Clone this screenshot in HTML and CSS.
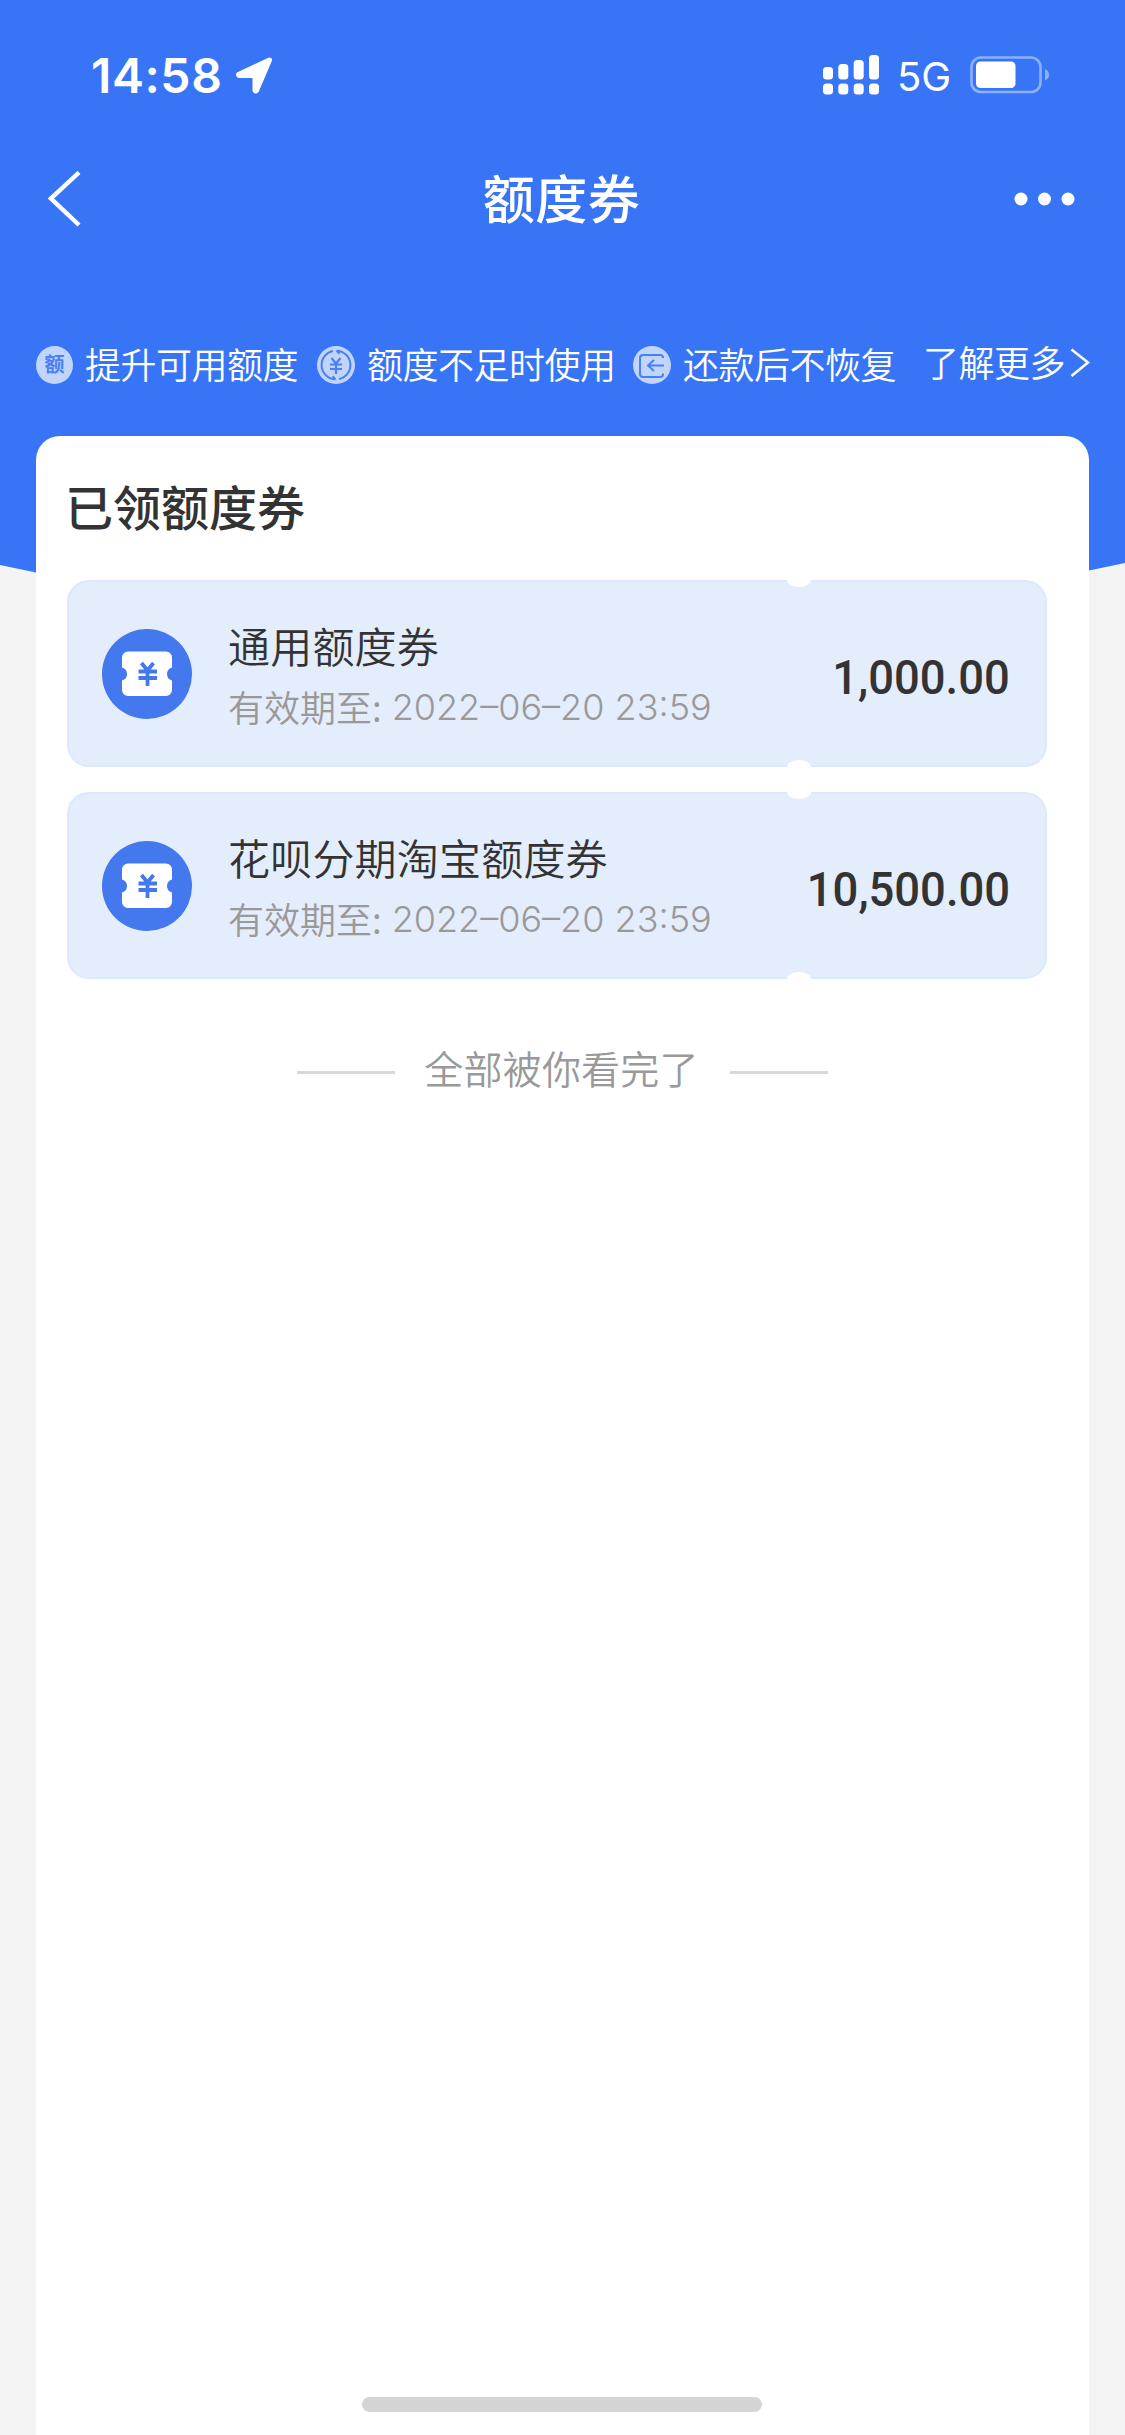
FILE: index.html
```html
<!DOCTYPE html>
<html lang="zh-CN">
<head>
<meta charset="utf-8">
<title>额度券</title>
<link rel="stylesheet" href="styles.css">
</head>
<body>
<svg class="defs" width="0" height="0" aria-hidden="true">
  <symbol id="ticket" viewBox="0 0 90 90">
    <circle cx="45" cy="45" r="45" fill="#4478ee"/>
    <path fill="#fff" d="M26 22.500H64a6 6 0 0 1 6 6V38.500q-5 1.500-5 6.500t5 6.500V61a6 6 0 0 1-6 6H26a6 6 0 0 1-6-6V51.500q5-1.500 5-6.500t-5-6.500V28.500a6 6 0 0 1 6-6Z"/>
    <path fill="none" stroke="#4478ee" stroke-width="3.800" d="M39.500 34l6 7.500 6-7.500M36.500 42.500h18.500M36.500 49h18.500M45.500 41V57"/>
  </symbol>
</svg>
<div class="page">
  <header class="hero">
    <div class="status">
      <span class="time">14:58</span>
      <svg class="locate" width="38" height="38" viewBox="0 0 38 38"><path fill="#fff" stroke="#fff" stroke-width="5" stroke-linejoin="round" d="M34.500 4L3.500 18.500Q3.500 19 4 19.500H20V34.500Q20.500 35.500 21.500 34.500Z"/></svg>
      <svg class="signal" width="57" height="40" viewBox="0 0 57 40" fill="#fff">
        <rect x="0" y="12" width="10" height="12.500" rx="3.500"/><rect x="15.300" y="9" width="10" height="15.500" rx="3.500"/><rect x="30.700" y="5" width="10" height="19.500" rx="3.500"/><rect x="46" y="0" width="10" height="24.500" rx="3.500"/>
        <rect x="0" y="28.500" width="10" height="11" rx="3.500"/><rect x="15.300" y="28.500" width="10" height="11" rx="3.500"/><rect x="30.700" y="28.500" width="10" height="11" rx="3.500"/><rect x="46" y="28.500" width="10" height="11" rx="3.500"/>
      </svg>
      <span class="network">5G</span>
      <svg class="battery" width="80" height="38" viewBox="0 0 80 38"><rect x="1.500" y="1.500" width="69" height="34.500" rx="9.500" fill="none" stroke="#8bb0fa" stroke-width="2.600"/><rect x="6" y="5.500" width="39.500" height="26.500" rx="4.500" fill="#fff"/><path d="M75 13q4 1.500 4 5.700t-4 5.700Z" fill="#8bb0fa"/></svg>
    </div>
    <nav class="nav">
      <svg class="back" width="34" height="56" viewBox="0 0 34 56"><path fill="none" stroke="#fff" stroke-width="4.400" d="M31 1.500L3 27.500L31 54"/></svg>
      <h1 class="nav-title">额度券</h1>
      <svg class="more" width="62" height="14" viewBox="0 0 62 14" fill="#fff"><circle cx="7" cy="7" r="6.500"/><circle cx="30.500" cy="7" r="6.500"/><circle cx="54" cy="7" r="6.500"/></svg>
    </nav>
    <div class="features">
      <span class="badge">额</span>
      <span class="feature f1">提升可用额度</span>
      <svg class="ficon" width="38" height="38" viewBox="0 0 38 38"><circle cx="19" cy="19" r="19" fill="#c1d5fc"/><g fill="none" stroke="#4a80f6" stroke-width="2"><path d="M16 5A14.300 14.300 0 0 0 18.500 33.300M22 33A14.300 14.300 0 0 0 19.500 4.700M19.500 4.700l3 3M18.500 33.300l-3-3"/><path stroke-width="2.200" d="M14.500 12l4.500 5.500 4.500-5.500M13 18.500h12M13 23h12M19 17.500V28"/></g></svg>
      <span class="feature f2">额度不足时使用</span>
      <svg class="ficon" width="38" height="38" viewBox="0 0 38 38"><circle cx="19" cy="19" r="19" fill="#c1d5fc"/><path fill="none" stroke="#4a80f6" stroke-width="2" d="M30 12V11.500Q30 9 27 9H10Q7 9 7 12V28Q7 31 10 31H27Q30 31 30 28.500V27.500M31 19.500H15.500M21 14l-6 5.500 6 5.500"/></svg>
      <span class="feature f3">还款后不恢复</span>
      <a class="learn">了解更多</a>
      <svg class="chev" width="20" height="30" viewBox="0 0 20 30"><path fill="none" stroke="#fff" stroke-width="2.600" d="M1.500 1.500L18 14.500L1.500 28"/></svg>
    </div>
  </header>
  <main class="card">
    <h2 class="card-title">已领额度券</h2>
    <section class="coupons">
      <article class="coupon">
        <svg class="coupon-icon"><use href="#ticket"/></svg>
        <div class="info"><h3 class="name">通用额度券</h3><p class="date"><span class="label">有效期至:</span><span class="stamp">2022–06–20 23:59</span></p></div>
        <strong class="amount">1,000.00</strong>
      </article>
      <article class="coupon">
        <svg class="coupon-icon"><use href="#ticket"/></svg>
        <div class="info"><h3 class="name">花呗分期淘宝额度券</h3><p class="date"><span class="label">有效期至:</span><span class="stamp">2022–06–20 23:59</span></p></div>
        <strong class="amount">10,500.00</strong>
      </article>
    </section>
    <p class="end"><span class="end-text">全部被你看完了</span></p>
    <div class="home"></div>
  </main>
</div>
</body>
</html>
```
FILE: styles.css
```css
* { box-sizing: border-box; }
body, h1, h2, h3, p { margin: 0; }
body {
  background: #f4f4f4;
  font-family: "Noto Sans CJK SC", sans-serif;
  color: #333;
}
svg { display: block; flex: none; }
.defs { position: absolute; }
.page {
  width: 1125px;
  height: 2435px;
  display: flex;
  flex-direction: column;
  overflow: hidden;
}
.hero {
  flex: none;
  height: 650px;
  margin-bottom: -214px;
  background: #3875f6;
  clip-path: polygon(0 0, 100% 0, 100% 563px, 1089px 570.5px, 1000px 585px, 120px 587px, 36px 572.500px, 0 565px);
  color: #fff;
}
.status {
  height: 130px;
  padding: 55px 0 0 91px;
  display: flex;
  align-items: flex-start;
}
.time {
  width: 144px;
  font: 600 48px/41px Inter, sans-serif;
  letter-spacing: 0.6px;
  white-space: nowrap;
}
.locate { margin-top: 1px; }
.signal { margin-left: 550px; }
.network {
  width: 72px;
  margin-left: 17px;
  font: 400 40px/43px Inter, sans-serif;
  white-space: nowrap;
}
.battery { margin-left: 1px; margin-top: 1px; }
.nav {
  height: 138px;
  padding: 0 49px;
  display: grid;
  grid-template-columns: 1fr auto 1fr;
  align-items: center;
}
.back { margin-left: -1px; }
.nav-title { font-size: 52px; line-height: 70px; margin: -5px 1px 0 -1px; font-weight: 500; letter-spacing: 0.5px; }
.more { justify-self: end; }
.features {
  height: 38px;
  margin-top: 78px;
  padding-left: 36px;
  display: flex;
  align-items: center;
}
.badge {
  width: 37px;
  height: 38px;
  border-radius: 50%;
  background: #c1d5fc;
  color: #4a80f6;
  font-size: 20px;
  line-height: 36px;
  font-weight: 700;
  text-align: center;
  flex: none;
}
.feature, .learn {
  font-size: 36px;
  line-height: 38px;
  letter-spacing: -0.5px;
  font-weight: 350;
  white-space: nowrap;
  flex: none;
}
.feature { margin-left: 12px; margin-top: -4px; }
.f1 { width: 232px; }
.f2 { width: 266px; }
.f3 { width: 240px; }
.learn { width: 147px; margin-top: -8px; }
.chev { margin-top: -4px; }
.card {
  flex: 1;
  width: 1053px;
  margin-left: 36px;
  background: #fff;
  border-radius: 24px 24px 0 0;
  padding: 33px 42px 0 31px;
  display: flex;
  flex-direction: column;
  z-index: 1;
}
.card-title { margin-left: -2px; font-size: 48px; line-height: 72px; font-weight: 500; }
.coupons {
  margin-top: 39px;
  display: grid;
  gap: 25px;
}
.coupon {
  position: relative;
  height: 187px;
  padding: 0 36px 0 34px;
  border: 2px solid #dbe8fd;
  border-radius: 22px;
  background: #e4edfc;
  display: flex;
  align-items: center;
}
.coupon::before, .coupon::after {
  content: "";
  position: absolute;
  left: 716px;
  width: 28px;
  height: 8px;
  background: #fff;
}
.coupon::before { top: -2px; clip-path: ellipse(12px 7px at 50% 0); }
.coupon::after { bottom: -2px; clip-path: ellipse(12px 7px at 50% 100%); }
.coupon-icon { width: 90px; height: 90px; margin-left: -1px; }
.info { margin-left: 36px; margin-top: 3px; flex: 1; }
.name { font-size: 42px; line-height: 60px; font-weight: 350; letter-spacing: 0.2px; }
.date { margin-top: 1px; font-size: 36px; line-height: 60px; color: #999; font-weight: 350; display: flex; white-space: nowrap; }
.stamp { margin: 1px 0 -1px 10px; font-family: Inter, sans-serif; }
.amount {
  margin-top: 8px;
  margin-right: -1px;
  font: 500 48px/60px Roboto, sans-serif;
  transform: scaleX(0.945);
  transform-origin: right;
}
.end {
  margin-top: 63px;
  margin-left: 11px;
  font-size: 39px;
  line-height: 60px;
  color: #999;
  font-weight: 350;
  display: flex;
  align-items: center;
  justify-content: center;
  gap: 30px;
}
.end-text { margin: -5px 1px 0 -1px; letter-spacing: 0.2px; }
.end::before, .end::after {
  content: "";
  width: 98px;
  height: 3px;
  margin-top: 6px;
  background: #d8d8d8;
}
.home {
  width: 400px;
  height: 15px;
  margin: auto 0 23px 295px;
  border-radius: 8px;
  background: #d4d4d4;
}
```
